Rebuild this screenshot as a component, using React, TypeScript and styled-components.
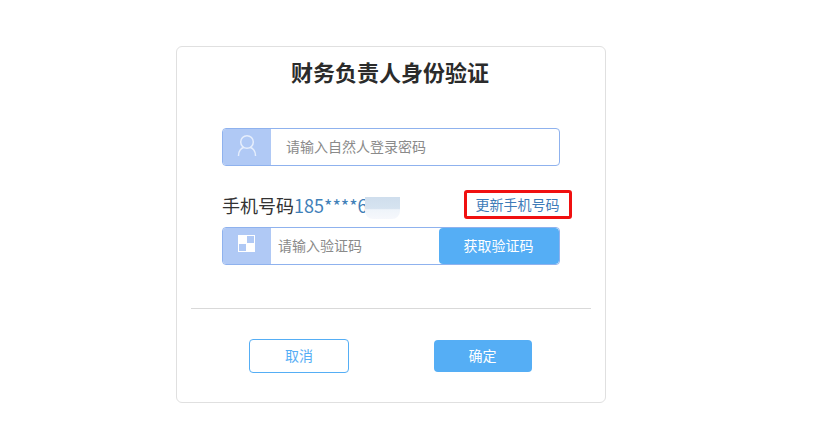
import React from "react";
import styled, { createGlobalStyle } from "styled-components";

const Global = createGlobalStyle`
  html, body { margin: 0; padding: 0; background: #fff; }
  body { font-family: "Noto Sans CJK SC", "Liberation Sans", sans-serif; }
`;

const Page = styled.div`
  width: 814px;
  height: 432px;
  box-sizing: border-box;
  padding: 46px 0 0 176px;
  background: #fff;
`;

const Card = styled.section`
  width: 430px;
  height: 357px;
  box-sizing: border-box;
  border: 1px solid #e0e0e0;
  border-radius: 6px;
  background: #fff;
`;

const Title = styled.h2`
  margin: 0;
  height: 52px;
  padding: 0 2px 4px 0;
  box-sizing: border-box;
  line-height: 48px;
  text-align: center;
  font-size: 22px;
  font-weight: 700;
  color: #2b2b2b;
`;

const Form = styled.div`
  width: 338px;
  margin: 29px 0 0 45px;
`;

const Field = styled.div<{ $mt?: number }>`
  display: flex;
  align-items: stretch;
  height: 38px;
  box-sizing: border-box;
  margin-top: ${(p) => p.$mt ?? 0}px;
  border: 1px solid #8fb2ee;
  border-radius: 4px;
  overflow: hidden;
  background: #fff;
`;

const IconCell = styled.div<{ $pt: number; $pr?: number }>`
  flex: 0 0 48px;
  box-sizing: border-box;
  display: flex;
  justify-content: center;
  align-items: flex-start;
  padding: ${(p) => p.$pt}px ${(p) => p.$pr ?? 0}px 0 0;
  background: #b0c9f5;
`;

const TextInput = styled.input<{ $pl: number }>`
  flex: 1;
  min-width: 0;
  border: 0;
  outline: 0;
  padding: 0 0 2px ${(p) => p.$pl}px;
  font: 400 14px "Noto Sans CJK SC", "Liberation Sans", sans-serif;
  color: #333;
  background: transparent;
  &::placeholder { color: #8a8a8a; opacity: 1; }
`;

const CodeButton = styled.button`
  flex: 0 0 120px;
  border: 0;
  border-radius: 4px;
  padding: 0 1px 2px 0;
  background: #55aef5;
  color: #fff;
  font: 400 14px "Noto Sans CJK SC", "Liberation Sans", sans-serif;
`;

const PhoneRow = styled.div`
  display: flex;
  justify-content: space-between;
  align-items: center;
  height: 29px;
  margin: 24px -12px 8px 0;
`;

const Phone = styled.div`
  position: relative;
  font-size: 18px;
  line-height: 29px;
  padding-top: 1px;
  color: #333;
  white-space: nowrap;
`;

const PhoneNumber = styled.span`
  color: #3f80b8;
`;

const Smudge = styled.div`
  position: absolute;
  left: 143px;
  top: 7px;
  width: 35px;
  height: 22px;
  border-radius: 0 0 8px 8px;
  background: linear-gradient(180deg, #cfdeed 0, #d6e3f0 52%, #eff4fa 58%, #f6f8fc 100%);
`;

const UpdateLink = styled.a`
  box-sizing: border-box;
  width: 108px;
  height: 29px;
  border: 3px solid #f01010;
  border-radius: 3px;
  padding-right: 1px;
  text-align: center;
  font-size: 14px;
  line-height: 23px;
  color: #3f7cb8;
`;

const Divider = styled.hr`
  width: 400px;
  height: 1px;
  margin: 43px 0 0 14px;
  border: 0;
  background: #d9d9d9;
`;

const Actions = styled.div`
  display: flex;
  align-items: center;
  gap: 85px;
  margin: 30px 0 0 72px;
`;

const Cancel = styled.button`
  width: 100px;
  height: 34px;
  padding: 0 0 2px;
  border: 1px solid #55aef5;
  border-radius: 4px;
  background: #fff;
  color: #55aef5;
  font: 400 14px "Noto Sans CJK SC", "Liberation Sans", sans-serif;
`;

const Confirm = styled.button`
  width: 98px;
  height: 32px;
  padding: 0 1px 2px 0;
  border: 0;
  border-radius: 4px;
  background: #55aef5;
  color: #fff;
  font: 400 14px "Noto Sans CJK SC", "Liberation Sans", sans-serif;
`;

const UserIcon = () => (
  <svg width="22" height="22" viewBox="0 0 22 22" fill="none" stroke="#e6eefc" strokeWidth="1.5">
    <circle cx="11" cy="8" r="6.3" />
    <path d="M2.5 21.5c0-4.6 3-7.6 5.2-8M19.5 21.5c0-4.6-3-7.6-5.2-8" strokeLinecap="round" />
  </svg>
);

const CheckerIcon = () => (
  <svg width="17" height="17" viewBox="0 0 17 17">
    <rect width="17" height="17" fill="#fff" />
    <rect x="9" y="1" width="7" height="7" fill="#b0c9f5" />
    <rect x="1" y="9" width="7" height="7" fill="#b0c9f5" />
  </svg>
);

export default function App() {
  return (
    <Page>
      <Global />
      <Card>
        <Title>财务负责人身份验证</Title>
        <Form>
          <Field>
            <IconCell $pt={5}><UserIcon /></IconCell>
            <TextInput $pl={15} placeholder="请输入自然人登录密码" />
          </Field>
          <PhoneRow>
            <Phone>
              手机号码<PhoneNumber>185****6</PhoneNumber>
              <Smudge />
            </Phone>
            <UpdateLink>更新手机号码</UpdateLink>
          </PhoneRow>
          <Field>
            <IconCell $pt={7} $pr={1}><CheckerIcon /></IconCell>
            <TextInput $pl={7} placeholder="请输入验证码" />
            <CodeButton>获取验证码</CodeButton>
          </Field>
        </Form>
        <Divider />
        <Actions>
          <Cancel>取消</Cancel>
          <Confirm>确定</Confirm>
        </Actions>
      </Card>
    </Page>
  );
}
